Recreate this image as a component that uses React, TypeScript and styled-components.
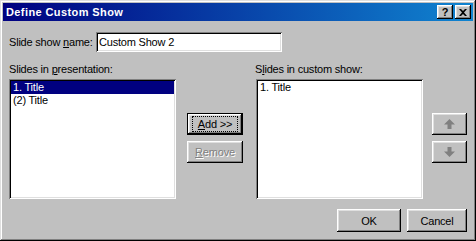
import React from 'react';
import styled, { createGlobalStyle } from 'styled-components';

const Global = createGlobalStyle`
  html, body { margin: 0; padding: 0; background: #c0c0c0; }
  body { font-family: 'Liberation Sans', Arial, sans-serif; font-size: 11px; letter-spacing: -0.2px; }
`;

const raised = `
  box-shadow: inset -1px -1px #000, inset 1px 1px #fff, inset -2px -2px #808080, inset 2px 2px #dfdfdf;
`;
const sunken = `
  box-shadow: inset 1px 1px #808080, inset -1px -1px #fff, inset 2px 2px #000, inset -2px -2px #dfdfdf;
`;

const Window = styled.div`
  box-sizing: border-box;
  width: 476px;
  height: 241px;
  padding: 3px;
  background: #c0c0c0;
  color: #000;
  display: flex;
  flex-direction: column;
  box-shadow: inset -1px -1px #000, inset 1px 1px #dfdfdf, inset -2px -2px #808080, inset 2px 2px #fff;
`;

const TitleBar = styled.div`
  height: 18px;
  display: flex;
  align-items: center;
  padding: 0 2px 0 3px;
  background: linear-gradient(to right, #000080, #1084d0);
  color: #fff;
  font-weight: bold;
  font-size: 11px;
`;

const Title = styled.span`
  flex: 1;
  line-height: 18px;
  letter-spacing: 0.4px;
`;

const CaptionButton = styled.div`
  box-sizing: border-box;
  width: 16px;
  height: 14px;
  display: flex;
  align-items: center;
  justify-content: center;
  background: #c0c0c0;
  color: #000;
  font-weight: bold;
  font-size: 11px;
  letter-spacing: 0;
  ${raised}
  & + & { margin-left: 2px; }
`;

const Body = styled.div`
  flex: 1;
  display: flex;
  flex-direction: column;
  padding: 11px 6px 0 6px;
`;

const NameRow = styled.div`
  display: flex;
  align-items: center;
  height: 20px;
`;

const NameLabel = styled.span`
  width: 87px;
`;

const TextField = styled.div`
  box-sizing: border-box;
  width: 186px;
  height: 20px;
  background: #fff;
  padding: 0 3px;
  display: flex;
  align-items: center;
  ${sunken}
`;

const Main = styled.div`
  display: flex;
  margin-top: 11px;
`;

const ListColumn = styled.div<{ $width: number; $gap?: number }>`
  display: flex;
  flex-direction: column;
  width: ${p => p.$width}px;
  margin-left: ${p => p.$gap ?? 0}px;
`;

const ColumnLabel = styled.div<{ $indent?: number }>`
  height: 13px;
  line-height: 13px;
  margin: 0 0 3px ${p => p.$indent ?? 0}px;
  white-space: nowrap;
`;

const ListBox = styled.div`
  box-sizing: border-box;
  height: 120px;
  background: #fff;
  padding: 2px;
  ${sunken}
`;

const ListItem = styled.div<{ $selected?: boolean }>`
  height: 13px;
  line-height: 13px;
  padding: 0 2px;
  background: ${p => (p.$selected ? '#000080' : 'transparent')};
  color: ${p => (p.$selected ? '#fff' : '#000')};
  white-space: nowrap;
`;

const ButtonColumn = styled.div<{ $width: number; $gap: number }>`
  display: flex;
  flex-direction: column;
  gap: 6px;
  width: ${p => p.$width}px;
  margin-left: ${p => p.$gap}px;
  padding-top: 50px;
`;

const Button = styled.div<{ $default?: boolean; $disabled?: boolean; $width?: number; $height?: number }>`
  box-sizing: border-box;
  width: ${p => (p.$width ? `${p.$width}px` : '100%')};
  height: ${p => p.$height ?? 22}px;
  display: flex;
  align-items: center;
  justify-content: center;
  background: #c0c0c0;
  color: ${p => (p.$disabled ? '#808080' : '#000')};
  text-shadow: ${p => (p.$disabled ? '1px 1px 0 #fff' : 'none')};
  ${p =>
    p.$default
      ? 'box-shadow: inset 0 0 0 1px #000, inset -2px -2px #000, inset 2px 2px #fff, inset -3px -3px #808080, inset 3px 3px #dfdfdf;'
      : raised}
`;

const FocusRing = styled.span`
  padding: 1px 5px;
  outline: 1px dotted #000;
  outline-offset: 0;
`;

const Mnemonic = styled.span`
  text-decoration: underline;
`;

const Footer = styled.div`
  display: flex;
  justify-content: flex-end;
  gap: 6px;
  margin-top: 10px;
`;

const ArrowUp = ({ color = '#808080' }: { color?: string }) => (
  <svg width="11" height="10" viewBox="0 0 11 10">
    <path d="M5.5 0 L11 5.5 L7.5 5.5 L7.5 10 L3.5 10 L3.5 5.5 L0 5.5 Z" fill={color} />
  </svg>
);

const ArrowDown = ({ color = '#808080' }: { color?: string }) => (
  <svg width="11" height="10" viewBox="0 0 11 10">
    <path d="M3.5 0 L7.5 0 L7.5 4.5 L11 4.5 L5.5 10 L0 4.5 L3.5 4.5 Z" fill={color} />
  </svg>
);

const CloseGlyph = () => (
  <svg width="8" height="7" viewBox="0 0 8 7">
    <path d="M0 0 H2 L4 2 L6 0 H8 L5 3.5 L8 7 H6 L4 5 L2 7 H0 L3 3.5 Z" fill="#000" />
  </svg>
);

export default function App() {
  return (
    <>
      <Global />
      <Window>
        <TitleBar>
          <Title>Define Custom Show</Title>
          <CaptionButton>?</CaptionButton>
          <CaptionButton>
            <CloseGlyph />
          </CaptionButton>
        </TitleBar>
        <Body>
          <NameRow>
            <NameLabel>
              Slide show <Mnemonic>n</Mnemonic>ame:
            </NameLabel>
            <TextField>Custom Show 2</TextField>
          </NameRow>
          <Main>
            <ListColumn $width={167}>
              <ColumnLabel>
                Slides in <Mnemonic>p</Mnemonic>resentation:
              </ColumnLabel>
              <ListBox>
                <ListItem $selected>1. Title</ListItem>
                <ListItem>(2) Title</ListItem>
              </ListBox>
            </ListColumn>
            <ButtonColumn $width={56} $gap={11}>
              <Button $default>
                <FocusRing>
                  <Mnemonic>A</Mnemonic>dd &gt;&gt;
                </FocusRing>
              </Button>
              <Button $disabled>
                <span>
                  <Mnemonic>R</Mnemonic>emove
                </span>
              </Button>
            </ButtonColumn>
            <ListColumn $width={167} $gap={13}>
              <ColumnLabel $indent={-1}>
                S<Mnemonic>l</Mnemonic>ides in custom show:
              </ColumnLabel>
              <ListBox>
                <ListItem>1. Title</ListItem>
              </ListBox>
            </ListColumn>
            <ButtonColumn $width={35} $gap={9}>
              <Button>
                <ArrowUp />
              </Button>
              <Button>
                <ArrowDown />
              </Button>
            </ButtonColumn>
          </Main>
          <Footer>
            <Button $width={64} $height={23}>OK</Button>
            <Button $width={60} $height={23}>Cancel</Button>
          </Footer>
        </Body>
      </Window>
    </>
  );
}
